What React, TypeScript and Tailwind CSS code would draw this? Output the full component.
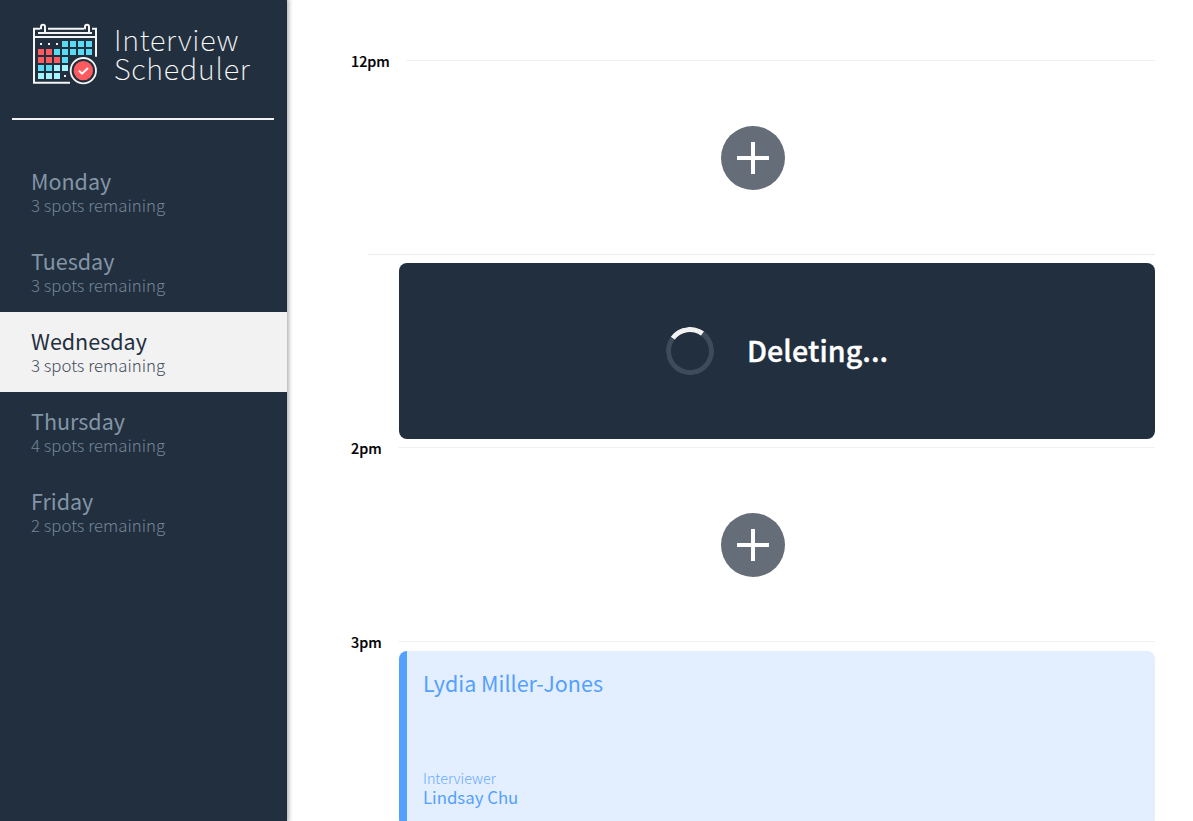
import React from "react";

const days = [
  { name: "Monday", spots: 3 },
  { name: "Tuesday", spots: 3 },
  { name: "Wednesday", spots: 3, selected: true },
  { name: "Thursday", spots: 4 },
  { name: "Friday", spots: 2 },
];

const cells: [number, number, string][] = [
  [126, 93, "#5adbf4"], [150, 93, "#5adbf4"], [174, 93, "#5adbf4"], [198, 93, "#5adbf4"],
  [54, 117, "#ff5a5f"], [78, 117, "#ff5a5f"], [102, 117, "#5adbf4"], [126, 117, "#5adbf4"],
  [150, 117, "#5adbf4"], [174, 117, "#5adbf4"], [198, 117, "#5adbf4"],
  [54, 141, "#ff5a5f"], [78, 141, "#ff5a5f"], [102, 141, "#ff5a5f"], [126, 141, "#5adbf4"],
  [54, 165, "#5adbf4"], [78, 165, "#5adbf4"], [102, 165, "#a5f3fd"], [126, 165, "#a5f3fd"],
  [54, 189, "#a5f3fd"], [78, 189, "#a5f3fd"], [102, 189, "#a5f3fd"],
];

function CalendarLogo() {
  return (
    <svg viewBox="36 36 198 189" className="h-[63px] w-[66px] shrink-0">
      <g fill="none" stroke="#f5f5f5" strokeWidth="6">
        <path d="M60 56H42V218H150M228 140V56H216M84 56H192M42 81H228" />
        <path d="M54 69H216" />
        <path d="M63 58V50a6 6 0 0 1 12 0V66M195 58V50a6 6 0 0 1 12 0V66" />
      </g>
      {cells.map(([x, y, fill]) => (
        <rect key={`${x}-${y}`} x={x} y={y} width="18" height="18" fill={fill} />
      ))}
      <g fill="#f5f5f5">
        <rect x="60" y="99" width="6" height="6" />
        <rect x="84" y="99" width="6" height="6" />
        <rect x="108" y="99" width="6" height="6" />
        <rect x="132" y="195" width="6" height="6" />
      </g>
      <circle cx="190" cy="182" r="43" fill="#222f3e" />
      <circle cx="190" cy="182" r="38" fill="#222f3e" stroke="#f5f5f5" strokeWidth="5.5" />
      <circle cx="190" cy="182" r="29" fill="#ff5a5f" />
      <path d="M177 182l9 9 18-17" fill="none" stroke="#fff" strokeWidth="6" />
    </svg>
  );
}

function Hour({ label, children, className = "h-[194px]" }: { label?: string; children: React.ReactNode; className?: string }) {
  return (
    <section className={`flex shrink-0 flex-col ${className}`}>
      <header className="flex h-[9px] shrink-0 items-start">
        {label && (
          <h4 className="-mt-[10px] mr-4 text-[14.3px] leading-[22px] font-medium text-black [-webkit-text-stroke:0.2px_black]">{label}</h4>
        )}
        <div className={label ? "h-px grow bg-[#f1f1f1]" : "ml-[17px] h-px grow bg-[#ececec]"} />
      </header>
      {children}
    </section>
  );
}

function AddButton() {
  return (
    <div className="flex h-[176px] items-center pt-[1px] pl-[370px]">
      <button className="flex size-16 items-center justify-center rounded-full bg-[#646d78]" aria-label="Add">
        <svg viewBox="0 0 32 32" className="size-8">
          <path d="M0 16H32M16 0V32" stroke="#fff" strokeWidth="4" />
        </svg>
      </button>
    </div>
  );
}

export default function App() {
  return (
    <main className="flex h-[821px] w-full overflow-hidden bg-white font-['Noto_Sans_CJK_SC',sans-serif]">
      <aside className="z-10 flex w-[287px] shrink-0 flex-col bg-[#222f3e] shadow-[1px_0_4px_1px_rgba(0,0,0,0.3)]">
        <div className="flex h-[118px] items-start gap-4 pt-[22px] pl-8">
          <CalendarLogo />
          <div className="pt-[2px] text-[29px] leading-[29px] font-thin tracking-[0.8px] text-white [-webkit-text-stroke:0.15px_white]">
            Interview
            <br />
            Scheduler
          </div>
        </div>
        <hr className="mr-[13px] ml-3 h-0.5 border-0 bg-[#f2f2f2]" />
        <nav className="mt-8">
          {days.map((d) => (
            <div
              key={d.name}
              className={`flex h-20 flex-col justify-center pt-px pl-[31px] ${d.selected ? "bg-[#f2f2f2] text-[#222f3e]" : "text-[#8395a7]"}`}
            >
              <h2 className="text-[21.5px] leading-6 font-normal">{d.name}</h2>
              <h3 className="text-[16.8px] leading-6 font-light opacity-85">{d.spots} spots remaining</h3>
            </div>
          ))}
        </nav>
      </aside>
      <div className="flex grow flex-col pt-[60px] pr-[38px] pl-16">
        <Hour label="12pm">
          <AddButton />
        </Hour>
        <Hour className="h-[193px]">
          <div className="ml-12 flex h-[176px] items-center rounded-lg bg-[#222f3e] pl-[267px]">
            <div className="size-12 -rotate-[9deg] rounded-full border-[5px] border-[#3e4b58] border-t-[#f2f2f2]" />
            <p className="-mt-0.5 ml-[33px] text-[28.6px] leading-9 font-medium tracking-[0.1px] text-white [-webkit-text-stroke:0.4px_white]">Deleting...</p>
          </div>
        </Hour>
        <Hour label="2pm">
          <AddButton />
        </Hour>
        <Hour label="3pm">
          <div className="mt-[1px] ml-12 flex h-[176px] shrink-0 flex-col overflow-hidden rounded-lg border-l-8 border-[#54a0ff] bg-[#e3effe] pl-4 text-[#54a0ff]">
            <h2 className="mt-4 text-[21.5px] leading-8">Lydia Miller-Jones</h2>
            <h4 className="mt-[69px] text-[14.3px] leading-5 font-light opacity-85">Interviewer</h4>
            <h3 className="-mt-px text-[16.8px] leading-5 font-normal">Lindsay Chu</h3>
          </div>
        </Hour>
      </div>
    </main>
  );
}
